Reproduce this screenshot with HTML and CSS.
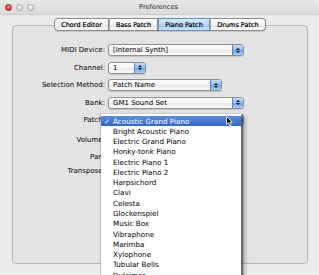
FILE: index.html
```html
<!DOCTYPE html>
<html>
<head>
<meta charset="utf-8">
<link rel="stylesheet" href="styles.css">
</head>
<body>
<div class="window">
  <div class="titlebar">
    <div class="lights"><span class="light red"></span><span class="light"></span><span class="light"></span></div>
    <div class="title">Preferences</div>
    <div></div>
  </div>
  <div class="content">
    <div class="tabs">
      <div class="tab t1">Chord Editor</div>
      <div class="tab t2">Bass Patch</div>
      <div class="tab t3 on">Piano Patch</div>
      <div class="tab t4">Drums Patch</div>
    </div>
    <div class="group">
      <div class="form">
        <div class="label">MIDI Device:</div>
        <div class="popup wide"><span class="val">[Internal Synth]</span><span class="arrows"><i class="up"></i><i class="down"></i></span></div>
        <div class="label">Channel:</div>
        <div class="popup narrow"><span class="val">1</span><span class="arrows"><i class="up"></i><i class="down"></i></span></div>
        <div class="label">Selection Method:</div>
        <div class="popup mid"><span class="val">Patch Name</span><span class="arrows"><i class="up"></i><i class="down"></i></span></div>
        <div class="label">Bank:</div>
        <div class="popup wide"><span class="val">GM1 Sound Set</span><span class="arrows"><i class="up"></i><i class="down"></i></span></div>
        <div class="label">Patch:</div>
        <div class="popup wide"><span class="val"></span><span class="arrows"><i class="up"></i><i class="down"></i></span></div>
        <div class="label">Volume:</div>
        <div class="slot"></div>
        <div class="label">Pan:</div>
        <div class="slot"></div>
        <div class="label">Transpose:</div>
        <div class="slot"></div>
      </div>
    </div>
  </div>
  <div class="menu">
    <div class="item sel"><span class="check">✓</span>Acoustic Grand Piano</div>
    <div class="item"><span class="check"></span>Bright Acoustic Piano</div>
    <div class="item"><span class="check"></span>Electric Grand Piano</div>
    <div class="item"><span class="check"></span>Honky-tonk Piano</div>
    <div class="item"><span class="check"></span>Electric Piano 1</div>
    <div class="item"><span class="check"></span>Electric Piano 2</div>
    <div class="item"><span class="check"></span>Harpsichord</div>
    <div class="item"><span class="check"></span>Clavi</div>
    <div class="item"><span class="check"></span>Celesta</div>
    <div class="item"><span class="check"></span>Glockenspiel</div>
    <div class="item"><span class="check"></span>Music Box</div>
    <div class="item"><span class="check"></span>Vibraphone</div>
    <div class="item"><span class="check"></span>Marimba</div>
    <div class="item"><span class="check"></span>Xylophone</div>
    <div class="item"><span class="check"></span>Tubular Bells</div>
    <div class="item"><span class="check"></span>Dulcimer</div>
  </div>
  <svg class="cursor" width="8" height="11" viewBox="0 0 8 11"><path d="M0.5 0.5 L0.5 8.5 L2.4 6.7 L3.8 9.8 L5.1 9.2 L3.8 6.3 L6.3 6.3 Z" fill="#000" stroke="#fff" stroke-width="0.8" stroke-linejoin="round"/></svg>
</div>
</body>
</html>
```
FILE: styles.css
```css
html, body {
  margin: 0;
  padding: 0;
}
body {
  width: 319px;
  height: 275px;
  overflow: hidden;
  background: #f0f0f0;
  font-family: "DejaVu Sans", "Lucida Grande", sans-serif;
  font-size: 7px;
  color: #111;
}
.window {
  position: relative;
  height: 275px;
  border-top-right-radius: 6px;
  overflow: hidden;
  background: repeating-linear-gradient(to bottom, #efefef 0 1px, #e9e9e9 1px 2px);
}
.titlebar {
  height: 15px;
  box-sizing: border-box;
  display: grid;
  grid-template-columns: 1fr auto 1fr;
  align-items: center;
  background: linear-gradient(#e8e8e8, #d9d9d9);
  border-bottom: 1px solid #cdcdcd;
}
.lights {
  display: flex;
  gap: 4px;
  padding-left: 5px;
}
.light {
  width: 7px;
  height: 7px;
  box-sizing: border-box;
  border-radius: 50%;
  border: 1px solid #a9a9a9;
  background: radial-gradient(circle at 50% 35%, #fbfbfb, #dcdcdc 60%, #c4c4c4);
}
.light.red {
  border-color: #a01a1a;
  background: radial-gradient(circle at 50% 35%, #ffb0a8, #e2403a 55%, #b41a15);
}
.title {
  font-size: 6.6px;
  color: #222;
  transform: translateX(-1px);
}
.content {
  padding: 3px 11px 0 12px;
}
.tabs {
  display: flex;
  justify-content: center;
  height: 13px;
  position: relative;
  z-index: 1;
}
.tab {
  box-sizing: border-box;
  height: 13px;
  border: 1px solid #8c8c8c;
  border-left: 1px solid #a8a8a8;
  display: flex;
  align-items: center;
  justify-content: center;
  font-size: 6.5px;
  color: #000;
  text-shadow: 0 0 0.4px rgba(0,0,0,0.6);
  background: linear-gradient(#ffffff, #f2f2f2 50%, #e3e3e3 51%, #f7f7f7);
  box-shadow: 0 1px 1px rgba(0,0,0,0.12);
}
.t1 { width: 55px; border-left-color: #8c8c8c; border-radius: 4px 0 0 4px; }
.t2 { width: 49px; }
.t3 { width: 52px; }
.t4 { width: 56px; border-radius: 0 4px 4px 0; }
.tab.on {
  background: linear-gradient(#d6eafc, #b6d6f6 50%, #9cc5f1 51%, #c8e3fb);
  border-color: #6d8fbd;
}
.group {
  margin-top: -6px;
  height: 239px;
  box-sizing: border-box;
  border: 1px solid #b6b6b6;
  border-radius: 4px;
  background: repeating-linear-gradient(to bottom, #e6e6e6 0 1px, #e1e1e1 1px 2px);
}
.form {
  display: grid;
  grid-template-columns: 92px auto;
  grid-template-rows: repeat(5, 17.5px) 22.5px 11.5px 16.5px;
  column-gap: 3px;
  align-items: center;
  justify-items: start;
  padding-top: 15.25px;
}
.label {
  justify-self: end;
  font-size: 7px;
  color: #000;
  white-space: nowrap;
}
.popup {
  height: 12px;
  box-sizing: border-box;
  border: 1px solid #8f8f8f;
  border-radius: 3px;
  background: linear-gradient(#ffffff, #f6f6f6 50%, #e8e8e8 51%, #fbfbfb);
  display: flex;
  align-items: center;
  box-shadow: 0 1px 1px rgba(0,0,0,0.15);
  overflow: hidden;
}
.popup .val {
  padding-left: 4px;
  font-size: 7px;
  color: #000;
  white-space: nowrap;
}
.popup.wide { width: 136px; }
.popup.narrow { width: 38px; }
.popup.mid { width: 114px; }
.arrows {
  margin-left: auto;
  width: 11px;
  height: 100%;
  box-sizing: border-box;
  border-left: 1px solid #5c82bd;
  background: linear-gradient(#c3dcf8, #8fbaf0 50%, #6aa2ea 51%, #a9cff7);
  display: flex;
  flex-direction: column;
  align-items: center;
  justify-content: center;
  gap: 1px;
}
.arrows i {
  display: block;
  width: 0;
  height: 0;
  border-left: 2px solid transparent;
  border-right: 2px solid transparent;
}
.arrows .up { border-bottom: 2.5px solid #111; }
.arrows .down { border-top: 2.5px solid #111; }
.slot {
  height: 10px;
}
.menu {
  position: absolute;
  left: 101px;
  top: 113px;
  width: 140px;
  height: 175px;
  box-sizing: border-box;
  padding-top: 2px;
  background: rgba(255,255,255,0.97);
  border-top: 1px solid #cfcfcf;
  box-shadow: 2px 2px 1px rgba(0,0,0,0.35), 4px 3px 4px rgba(0,0,0,0.3), -1px 0 1px rgba(0,0,0,0.15);
}
.item {
  height: 10.28px;
  display: flex;
  align-items: center;
  font-size: 7.2px;
  color: #000;
  white-space: nowrap;
}
.item .check {
  width: 12px;
  text-align: center;
  flex: none;
}
.item.sel {
  background: linear-gradient(#5f8ddb, #3565c6);
  color: #fff;
}
.cursor {
  position: absolute;
  left: 226px;
  top: 116px;
}
```
